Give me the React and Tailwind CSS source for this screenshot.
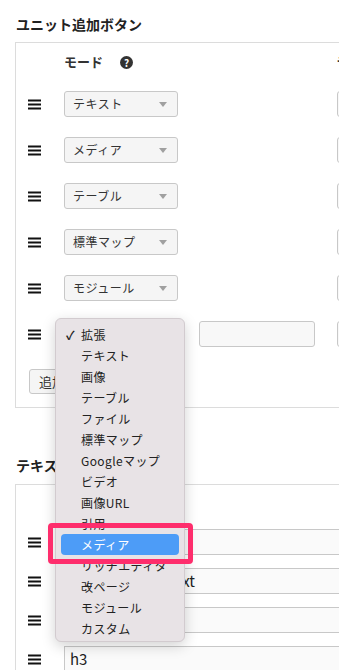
import React from 'react';

const font = { fontFamily: '"Noto Sans CJK JP", "Noto Sans", sans-serif' };

const Bars = () => (
    <svg width="13" height="11" viewBox="0 0 13 11" className="block">
        <rect x="0" y="0.5" width="13" height="2" fill="#111" />
        <rect x="0" y="4.5" width="13" height="2" fill="#111" />
        <rect x="0" y="8.5" width="13" height="2" fill="#111" />
    </svg>
);

const Select = ({ label }) => (
    <div className="w-[114px] h-[26px] shrink-0 flex items-center justify-between pl-[8px] pr-[10px] bg-[#f5f5f5] border border-[#c8c8c8] rounded-[3px] text-[12px] tracking-[0.5px] text-[#333]">
        <span>{label}</span>
        <svg width="8" height="5" viewBox="0 0 8 5"><path d="M0 0h8L4 5z" fill="#a0a0a0" /></svg>
    </div>
);

const units = ['テキスト', 'メディア', 'テーブル', '標準マップ', 'モジュール', '拡張'];

const menu = ['拡張', 'テキスト', '画像', 'テーブル', 'ファイル', '標準マップ', 'Googleマップ', 'ビデオ', '画像URL', '引用', 'メディア', 'リッチエディター', '改ページ', 'モジュール', 'カスタム'];

const textRows = ['', 'unit-contents-text', '', 'h3'];

export default function App() {
    return (
        <div className="relative w-[339px] h-[670px] overflow-hidden bg-white text-[#333]" style={font}>
            <div className="pl-[15px] pt-[14px]">
                <h2 className="ml-px h-[20px] leading-[20px] text-[14px] font-bold text-[#222]">ユニット追加ボタン</h2>

                <div className="mt-[8px] w-[420px] border-l border-t border-b border-[#dcdcdc] pt-[10px] pb-[13px]">
                    <div className="flex items-center h-[18px] text-[13px] font-bold">
                        <div className="w-[48px]" />
                        <span>モード</span>
                        <span className="ml-[17px] w-[13px] h-[13px] rounded-full bg-[#333] text-white text-[10px] leading-[13px] text-center font-bold">?</span>
                        <span className="ml-[203px]">ラベル</span>
                    </div>

                    {units.map((u, i) => (
                        <div key={i} className="mt-[20px] flex items-center h-[26px]">
                            <div className="w-[48px] pl-[12px]"><Bars /></div>
                            <Select label={u} />
                            {i === 5 ? (
                                <div className="ml-[21px] w-[116px] h-[26px] bg-[#f8f8f8] border border-[#c8c8c8] rounded-[3px]" />
                            ) : (
                                <div className="ml-[21px] w-[116px]" />
                            )}
                            <div className="ml-[22px] w-[60px] h-[26px] bg-[#f8f8f8] border border-[#c8c8c8] rounded-[3px]" />
                        </div>
                    ))}

                    <button className="mt-[22px] ml-[13px] h-[25px] px-[9px] bg-[#f5f5f5] border border-[#c8c8c8] rounded-[3px] text-[13px] text-[#333]">追加</button>
                </div>

                <h2 className="mt-[47px] ml-px h-[20px] leading-[20px] text-[14px] font-bold text-[#222]">テキストユニット</h2>

                <div className="mt-[9px] w-[420px] border-l border-t border-[#dcdcdc] pt-[44px]">
                    {textRows.map((t, i) => (
                        <div key={i} className={`flex items-center h-[26px] ${i ? 'mt-[13px]' : ''}`}>
                            <div className="w-[48px] pl-[12px]"><Bars /></div>
                            <div className="flex-1 h-[26px] flex items-center pl-[5px] bg-[#fafafa] border border-[#c8c8c8] text-[15px] text-[#222]">{t}</div>
                        </div>
                    ))}
                </div>
            </div>

            <div className="absolute left-[55px] top-[318px] w-[130px] h-[324px] pt-[5px] bg-[#e8e3e6] border border-[#d2cbcf] rounded-[6px] shadow-[0_4px_14px_rgba(0,0,0,0.18)]">
                {menu.map((m, i) => (
                    <div key={i} className={`relative h-[21px] leading-[21px] text-[12px] tracking-[0.4px] pl-[20px] mx-[5px] rounded-[4px] ${m === 'メディア' ? 'bg-[#4d9cf7] text-white' : 'text-[#222]'}`}>
                        {i === 0 && <span className="absolute left-[5px] top-0 text-[12px] font-bold">✓</span>}
                        {m}
                    </div>
                ))}
            </div>

            <div className="absolute left-[48px] top-[523px] w-[145px] h-[41px] border-[5px] border-[#fe2d6c] rounded-[4px]" />
        </div>
    );
}
